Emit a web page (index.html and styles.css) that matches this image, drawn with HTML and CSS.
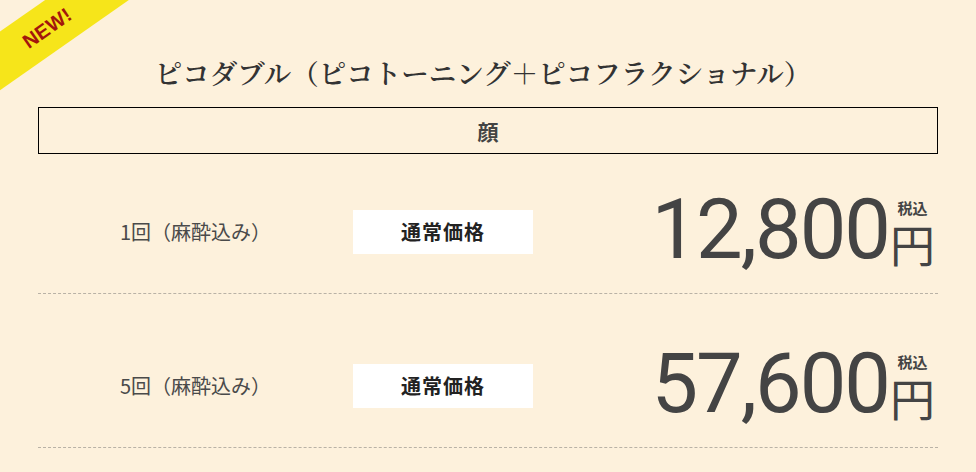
FILE: index.html
```html
<!DOCTYPE html>
<html lang="ja">
<head>
<meta charset="utf-8">
<title>ピコダブル</title>
<link rel="stylesheet" href="styles.css">
</head>
<body>
<div class="page">
  <div class="ribbon"><span class="ribbon__text">NEW!</span></div>
  <h2 class="title">ピコダブル（ピコトーニング＋ピコフラクショナル）</h2>
  <div class="category">顔</div>
  <div class="rows">
    <div class="row">
      <div class="row__label">1回（麻酔込み）</div>
      <div class="row__tag">通常価格</div>
      <div class="price">
        <span class="price__amount">12,800</span>
        <span class="price__unit"><span class="price__tax">税込</span><span class="price__yen">円</span></span>
      </div>
    </div>
    <div class="row">
      <div class="row__label">5回（麻酔込み）</div>
      <div class="row__tag">通常価格</div>
      <div class="price">
        <span class="price__amount">57,600</span>
        <span class="price__unit"><span class="price__tax">税込</span><span class="price__yen">円</span></span>
      </div>
    </div>
  </div>
</div>
</body>
</html>
```
FILE: styles.css
```css
* { box-sizing: border-box; }
html, body { margin: 0; padding: 0; }
body {
  background: #fdf1dc;
  color: #444;
  font-family: "Noto Sans CJK JP", "Noto Sans", sans-serif;
}
.page {
  position: relative;
  height: 472px;
  overflow: hidden;
  padding: 50px 38px 0;
}
.ribbon {
  position: absolute;
  left: -73px;
  top: 4px;
  width: 240px;
  height: 48px;
  background: #f6e51a;
  transform: rotate(-35deg);
  display: flex;
  align-items: center;
  justify-content: center;
}
.ribbon__text {
  font-family: "Liberation Sans", Arial, sans-serif;
  font-weight: 700;
  font-size: 20px;
  color: #a3160c;
  letter-spacing: 0.3px;
}
.title {
  margin: 0 0 13px;
  padding-right: 10px;
  text-align: center;
  font-family: "Noto Serif CJK JP", "Noto Sans CJK JP", serif;
  font-weight: 600;
  font-size: 27.5px;
  line-height: 44px;
  color: #333;
}
.category {
  height: 47px;
  border: 1px solid #000;
  display: flex;
  align-items: center;
  justify-content: center;
  font-size: 21px;
  font-weight: 700;
  color: #444;
}
.row {
  display: flex;
  align-items: center;
  height: 154px;
  padding: 30px 3px 0 82px;
  border-bottom: 1px dashed #b9b2a6;
}
.row:first-child {
  height: 140px;
  padding-top: 16px;
}
.row__label {
  width: 233px;
  font-size: 20px;
  color: #4a4a4a;
}
.row__tag {
  width: 180px;
  height: 44px;
  background: #fff;
  display: flex;
  align-items: center;
  justify-content: center;
  font-size: 20px;
  font-weight: 700;
  color: #222;
  letter-spacing: 1px;
}
.price {
  margin-left: auto;
  margin-top: -4px;
  display: flex;
  align-items: flex-end;
}
.price__amount {
  font-family: Roboto, "Noto Sans", sans-serif;
  font-size: 83px;
  line-height: 1;
  letter-spacing: -2px;
  color: #444;
}
.price__unit {
  display: flex;
  flex-direction: column;
  align-items: center;
  margin-left: 1px;
  margin-bottom: 7px;
}
.price__tax {
  font-size: 15px;
  font-weight: 700;
  line-height: 15px;
  margin-bottom: 9px;
  color: #444;
}
.price__yen {
  font-size: 45px;
  line-height: 40px;
  color: #444;
}
```
